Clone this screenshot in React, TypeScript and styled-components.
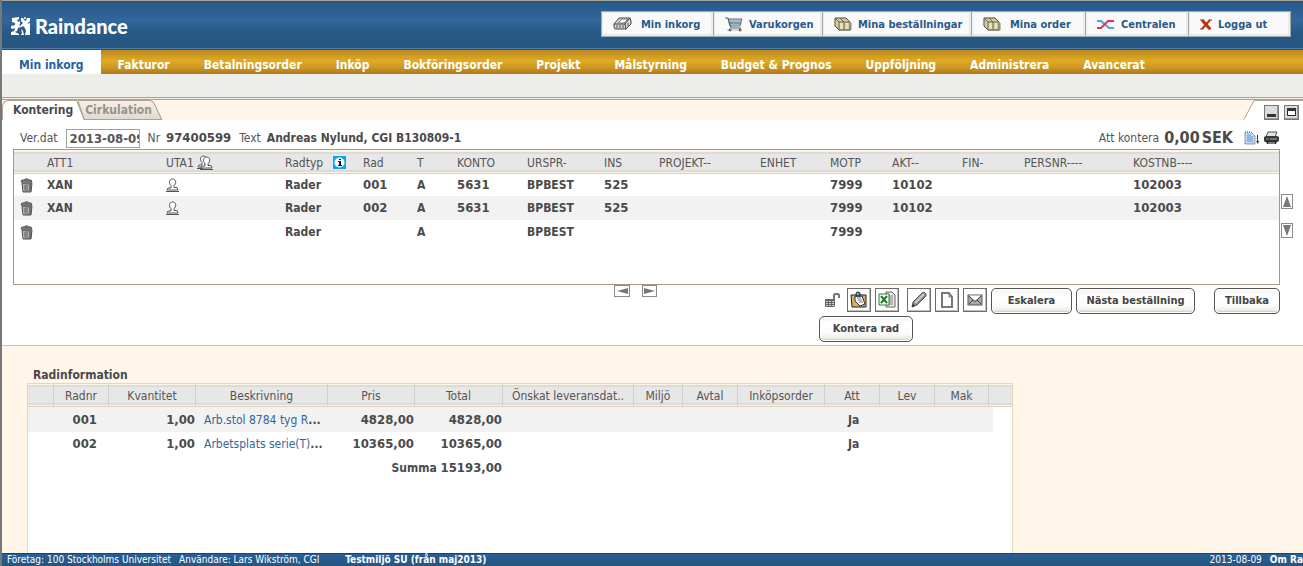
import React from 'react';
import styled, { createGlobalStyle } from 'styled-components';

const sans = '"DejaVu Sans Condensed", "DejaVu Sans", sans-serif';

const Global = createGlobalStyle`
  *, *::before, *::after { box-sizing: border-box; }
  body { margin: 0; background: #fff6e9; font-family: ${sans}; font-size: 12px; line-height: 16px; color: #555; }
  button, input { font-family: inherit; font-size: inherit; color: inherit; margin: 0; }
  button { cursor: pointer; }
  svg { display: block; flex: none; }
`;

const Page = styled.div`
  min-height: 100vh;
  display: flex;
  flex-direction: column;
  overflow: hidden;
  border-left: 2px solid #77787a;
`;

const Header = styled.header`
  display: flex;
  justify-content: space-between;
  align-items: center;
  height: 50px;
  padding: 0 12px 2px 9px;
  border-top: 1px solid #a9a596;
  border-bottom: 1px solid #24527f;
  box-shadow: inset 0 -1px 0 #4a7cae, inset 0 1px 0 #2a4f7c;
  background: linear-gradient(#28588a, #336699 42%, #285986 66%, #265581);
`;

const Logo = styled.a`
  display: flex;
  align-items: center;
  gap: 4px;
  padding-top: 4px;
  color: #fff;
  text-decoration: none;
  font: 900 20px/24px Lato, sans-serif;
`;

const QuickLinks = styled.nav`
  display: flex;
  height: 26px;
  border: 1px solid #a3aaab;
  background: #a3aaab;
  gap: 1px;
`;

const QuickButton = styled.button<{ $w: number; $gap: number }>`
  display: flex;
  align-items: center;
  gap: ${p => p.$gap}px;
  width: ${p => p.$w}px;
  padding: 0 0 0 10px;
  border: 1px solid #e6ecec;
  background: #f9f9f9;
  box-shadow: inset -1px -1px 0 #e6ecec;
  color: #28598c;
  font-size: 11px;
  font-weight: bold;
  white-space: nowrap;
`;

const MainNav = styled.nav`
  display: flex;
  height: 24px;
  background: linear-gradient(#bb8720, #dfac23 45%, #cf9a22 70%, #ae7a20);
`;

const NavLink = styled.a<{ $active?: boolean }>`
  padding: 7px 17px 0 17px;
  color: ${p => (p.$active ? '#28619c' : '#fff')};
  background: ${p => (p.$active ? '#fff' : 'none')};
  font-weight: bold;
  text-decoration: none;
  white-space: nowrap;
`;

const SubBar = styled.div`
  height: 26px;
  background: #edeeea;
  border-bottom: 3px double #aaa591;
`;

const TabStrip = styled.div`
  display: flex;
  justify-content: space-between;
  height: 20px;
  background: #fff6e9;
`;

const Tabs = styled.div`
  display: flex;
`;

const Tab = styled.button<{ $active?: boolean }>`
  position: relative;
  z-index: ${p => (p.$active ? 1 : 0)};
  height: 20px;
  margin-right: -6px;
  padding: ${p => (p.$active ? '0 11px' : '0 11px 0 7px')};
  border: 0;
  background: none;
  color: ${p => (p.$active ? '#4a4a4a' : '#969488')};
  font-weight: bold;
  line-height: 21px;
  svg { position: absolute; inset: 0; width: 100%; height: 100%; }
  span { position: relative; }
`;

const WindowTools = styled.div`
  display: flex;
  align-items: flex-end;
  gap: 5px;
  padding-right: 4px;
`;

const PlainButton = styled.button`
  display: block;
  padding: 0;
  border: 0;
  background: none;
`;

const Panel = styled.main`
  padding: 0 10px 3px 11px;
  background: #fff;
  border-bottom: 1px solid #c8c3bd;
`;

const InfoRow = styled.div`
  display: flex;
  justify-content: space-between;
  align-items: center;
  height: 29px;
  padding: 7px 14px 0 7px;
  white-space: nowrap;
`;

const InfoGroup = styled.div<{ $gap: number }>`
  display: flex;
  align-items: center;
  gap: ${p => p.$gap}px;
`;

const Bold = styled.b`
  color: #4a4a4a;
`;

const Num = styled.b`
  font-size: 13px;
  color: #4a4a4a;
`;

const Pair = styled.span`
  display: flex;
  gap: 6px;
`;

const DateInput = styled.input`
  width: 74px;
  height: 19px;
  padding: 0 0 0 3px;
  border: 1px solid #9aa5a8;
  background: #fff;
  font-size: 13px;
  font-weight: bold;
`;

const Amount = styled.b`
  display: flex;
  gap: 2px;
  margin-right: 6px;
  font-size: 16px;
  color: #4a4a4a;
`;

const GridArea = styled.div`
  display: flex;
`;

const GridBox = styled.div`
  flex: 1;
  min-width: 0;
  min-height: 136px;
  overflow: hidden;
  border: 1px solid #a99780;
`;

const headBands =
  'linear-gradient(#fdf4e4 0 2px, #dbdbdb 2px 4px, #e7e7e7 4px 20px, #dbdbdb 20px 22px, #fdf4e4 22px)';

const AccountTable = styled.table`
  width: 100%;
  table-layout: fixed;
  border-collapse: separate;
  border-spacing: 0;
  white-space: nowrap;
  th, td { padding: 0; text-align: left; }
  thead tr { background: ${headBands}; }
  th { height: 24px; padding-top: 2px; border-bottom: 1px solid #e0d3b4; font-weight: normal; }
  td { height: 24px; font-weight: bold; color: #4a4a4a; }
  tbody tr:first-child td { height: 22px; }
  tbody tr:nth-child(2) { background: #f2f2f2; }
  td:first-child { padding-left: 6px; }
`;

const HeadLabel = styled.span<{ $gap: number }>`
  display: flex;
  align-items: center;
  gap: ${p => p.$gap}px;
`;

const RowPager = styled.div`
  display: flex;
  flex-direction: column;
  gap: 14px;
  padding: 45px 0 0 1px;
  width: 13px;
`;

const ArrowButton = styled.button<{ $w: number; $h: number }>`
  display: flex;
  align-items: center;
  justify-content: center;
  width: ${p => p.$w}px;
  height: ${p => p.$h}px;
  padding: 0;
  border: 1px solid #8b8b8b;
  background: #fff;
`;

const Actions = styled.div`
  display: grid;
  grid-template-columns: 1fr 461px;
  padding-right: 13px;
`;

const ColumnPager = styled.div`
  display: flex;
  justify-content: flex-end;
  gap: 12px;
  padding-right: 162px;
`;

const ButtonStack = styled.div`
  display: flex;
  flex-direction: column;
  gap: 2px;
  padding-top: 3px;
`;

const ButtonRow = styled.div`
  display: flex;
  gap: 4px;
`;

const IconGroup = styled.div`
  display: flex;
  gap: 4px;
  margin-right: 4px;
`;

const LockSlot = styled.div`
  width: 24px;
  padding: 4px 0 0 6px;
`;

const IconButton = styled.button`
  display: flex;
  align-items: center;
  justify-content: center;
  width: 24px;
  height: 24px;
  padding: 0;
  border: 1px solid #6d6d6d;
  background: #fff;
  box-shadow: inset -1px -1px 0 #bdbdbd;
`;

const PushButton = styled.button<{ $w: number; $push?: boolean }>`
  width: ${p => p.$w}px;
  height: 26px;
  margin-left: ${p => (p.$push ? 'auto' : '0')};
  padding: 0 0 2px;
  border: 1px solid #555;
  border-radius: 5px;
  background: linear-gradient(#f4f4f4, #fff 30%, #fbfbf8 70%, #e6e5da);
  box-shadow: inset 0 0 0 1px #fff, inset 0 -2px 1px #d5d3c4;
  color: #444;
  font-size: 11px;
  font-weight: bold;
  white-space: nowrap;
`;

const Lower = styled.section`
  flex: 1;
  display: flex;
  flex-direction: column;
  align-items: flex-start;
  padding: 20px 0 0 25px;
`;

const Title = styled.h2`
  margin: 0;
  padding: 1px 0 0 6px;
  font-size: 12px;
  line-height: 16px;
  color: #4a4a4a;
`;

const LinesBox = styled.div`
  flex: 1;
  background: #fff;
  border: 1px solid #e0d8bf;
  border-bottom: 0;
`;

const LinesTable = styled.table`
  width: 984px;
  table-layout: fixed;
  border-collapse: separate;
  border-spacing: 0;
  white-space: nowrap;
  th, td { padding: 0; }
  thead tr { background: linear-gradient(#fdf4e4 0 1px, #dbdbdb 1px 3px, #e7e7e7 3px 19px, #dbdbdb 19px 21px, #fdf4e4 21px); }
  th { height: 23px; padding-top: 2px; border-bottom: 1px solid #e0d3b4; font-weight: normal; }
  th + th { border-left: 1px solid #cfcfcf; }
  td { height: 24px; font-weight: bold; color: #4a4a4a; }
  tbody tr:first-child td { height: 25px; }
  tbody tr:first-child td:not(:last-child) { background: #f2f2f2; }
`;

const NumCell = styled.td<{ $pad?: number }>`
  text-align: right;
  && { padding-right: ${p => p.$pad ?? 0}px; }
`;

const DescCell = styled.td`
  && { padding-left: 9px; }
  a { color: #336699; font-weight: normal; text-decoration: none; }
`;

const AttCell = styled.td`
  && { padding-left: 24px; }
`;

const Footer = styled.footer`
  display: flex;
  justify-content: space-between;
  height: 13px;
  padding: 0 0 0 5px;
  border-top: 1px solid #1c4468;
  background: linear-gradient(#2a5f94, #265581);
  color: #fff;
  font-size: 10px;
  line-height: 12px;
  white-space: nowrap;
`;

const FooterGroup = styled.div`
  display: flex;
  gap: 8px;
`;

const Environment = styled.b`
  margin-left: 18px;
`;

const LogoMark = () => (
  <svg width="20" height="19" viewBox="0 0 20 19">
    <path
      fill="#fff"
      d="M1 1L8 0v2L6 3l1 2 2-1v3L8 8l2 1v1L7 11l-1 3-2 1 4 2v1H0v-3l3-1 1-3-3 1-1-1V9l4-1L4 6 1 5zM10 1h2l1 2 2 1 1-3h3v3l-2 2-1 1 3-1v12h-5l1-4-1-3-2-2-2 1V8l2-2-2-2z"
    />
    <circle cx="14" cy="1" r="1" fill="#fff" />
    <path fill="#fff" d="M10 12l2 2 1 4h-3l1-2z" />
  </svg>
);

const InboxIcon = () => (
  <svg width="19" height="14" viewBox="0 0 19 14" strokeLinejoin="round">
    <path d="M1 7l5-6h11l1 3v3l-5 5H2l-1-2z" fill="#d8d6cc" stroke="#444" />
    <path d="M1 7h11l1 5M12 7l5-6" stroke="#444" fill="none" />
    <path d="M5 6l4-4h6l-4 4z" fill="#fff" stroke="#777" />
    <path d="M4 8v3M7 8v3M10 8v3M15 6v3" stroke="#555" />
  </svg>
);

const CartIcon = () => (
  <svg width="19" height="15" viewBox="0 0 19 15" fill="none">
    <path d="M3 2h14l-2 7H5z" fill="#a9c8d6" stroke="#64747c" />
    <path d="M0 1h3l3 10h10M5 6h11" stroke="#555f64" />
    <path d="M8 3l1 6M11 3v6M14 3l-1 6" stroke="#8fa9b4" />
    <path d="M2 13h15" stroke="#b4bcc0" />
    <circle cx="5" cy="13" r="1" stroke="#444" />
    <circle cx="15" cy="13" r="1" stroke="#444" />
  </svg>
);

const BoxesIcon = () => (
  <svg width="18" height="14" viewBox="0 0 18 14" strokeLinejoin="round">
    <path d="M1 1h11l4 4v8H5L1 9z" fill="#d9cc9c" stroke="#4b4940" />
    <path d="M5 13V5h11M5 5L1 1M6 1l4 4v8" fill="none" stroke="#6b6650" />
    <path d="M6 6h3v6H6zM12 6h2v6h-2z" fill="#e9e0bb" />
    <path d="M5 13h12V6" fill="none" stroke="#8a8674" />
  </svg>
);

const ShuffleIcon = () => (
  <svg width="18" height="11" viewBox="0 0 18 11" fill="none" strokeWidth="2">
    <path d="M0 2h4l8 7h5" stroke="#5b9ad4" />
    <path d="M0 9h4l7-7h6" stroke="#e2315f" />
  </svg>
);

const CrossIcon = () => (
  <svg width="12" height="11" viewBox="0 0 12 11" fill="none" stroke="#bb2f0d">
    <path d="M2 1l8 9" strokeWidth="3" />
    <path d="M10 1l-8 9" strokeWidth="2" />
    <path d="M0 1h3M9 1h3M0 10h3M9 10h2" strokeWidth="1" />
  </svg>
);

const TrashIcon = () => (
  <svg width="13" height="15" viewBox="0 0 13 15">
    <path d="M2 5h10l-1 9H3z" fill="#8c8c8c" stroke="#505050" />
    <path d="M1 4l1-2h9l1 2z" fill="#999" stroke="#4a4a4a" />
    <path d="M5 2V1h3v1" fill="none" stroke="#4a4a4a" />
    <path d="M4 6v7M6 7v5M8 7v5" stroke="#ddd" />
    <path d="M5 7v5M7 7v5M10 6v7" stroke="#555" />
  </svg>
);

const stampShape = 'M5 7.500C3 6 2.500 1 6.500 1s4 5 1.500 6.500v2h3l1 2.500H1l1-2h3z';

const Stamp = () => (
  <svg width="13" height="15" viewBox="0 0 13 15" fill="#fff" stroke="#555">
    <path d={stampShape} />
    <path d="M0 13.500h13" />
  </svg>
);

const DoubleStamp = () => (
  <svg width="16" height="16" viewBox="0 0 16 16" fill="#fff" stroke="#555">
    <path d={stampShape} />
    <path d="M0 13.500h6" />
    <g transform="translate(3 1)">
      <path d={stampShape} />
      <path d="M0 13.500h13" />
    </g>
  </svg>
);

const InfoIcon = () => (
  <svg width="13" height="13" viewBox="0 0 13 13">
    <rect width="13" height="13" fill="#0aa5f5" />
    <circle cx="6.500" cy="6.500" r="5" fill="#fff" />
    <path d="M6 3h2v1H6zM5 5h3v4h1v1H5V9h1V6H5z" fill="#1c1440" />
  </svg>
);

const CopyIcon = () => (
  <svg width="15" height="14" viewBox="0 0 15 14">
    <path d="M1 1h6l4 4v8H1z" fill="#c5dbf5" stroke="#444" strokeDasharray="1 1" />
    <path d="M3 4h4M3 6h6M3 8h6M3 10h6" stroke="#5b8fd0" strokeWidth="1" />
    <path d="M13.500 4v7" stroke="#333" />
    <path d="M12 10h3l-1 3z" fill="#333" />
  </svg>
);

const PrinterIcon = () => (
  <svg width="15" height="14" viewBox="0 0 15 14">
    <path d="M4 1h9l-2 5H2z" fill="#dde5ee" stroke="#555" />
    <path d="M0 6l2-1h11l2 1v4l-2 1H1l-1-1z" fill="#3b3b3b" />
    <path d="M2 10h11l-1 3H3z" fill="#222" />
    <path d="M4 12h7" stroke="#ddd" />
    <path d="M2 8h3" stroke="#35c03b" />
    <path d="M6 8h7" stroke="#aaa" />
  </svg>
);

const WindowIcon = ({ max }: { max?: boolean }) => (
  <svg width="15" height="15" viewBox="0 0 15 15">
    <rect x=".5" y=".5" width="14" height="14" fill="#dcdcdc" stroke="#777" />
    <path d="M1 13.500h13M13.500 1v13" stroke="#999" />
    {max ? (
      <>
        <path d="M3.500 3.500h8v7h-8z" fill="#fff" stroke="#222" />
        <path d="M3 3h9v3H3z" fill="#333" />
      </>
    ) : (
      <path d="M3 9h9v3H3z" fill="#333" />
    )}
  </svg>
);

const LockIcon = () => (
  <svg width="15" height="16" viewBox="0 0 15 16">
    <path d="M9 8V3l1-1h3l1 1v3" fill="none" stroke="#777" strokeWidth="2" />
    <path d="M0 7h10v7l-1 1H0z" fill="#666" />
    <path d="M1 9.500h8M1 11.500h8M1 13.500h8" stroke="#ccc" strokeDasharray="2 1" />
  </svg>
);

const ClipboardIcon = () => (
  <svg width="18" height="18" viewBox="0 0 18 18">
    <path d="M1 4h15v12H2z" fill="#d2b25e" stroke="#222" />
    <path d="M5 5h7l3 8-5 2-5-5z" fill="#fff" stroke="#333" />
    <path d="M7 7h4M8 9h4M9 11h4" stroke="#777" />
    <path d="M5 4l3-3 4 3v2H5z" fill="#456" />
    <circle cx="8" cy="3" r="2" fill="#7cabc4" stroke="#222" />
  </svg>
);

const ExcelIcon = () => (
  <svg width="18" height="18" viewBox="0 0 18 18">
    <path d="M8 1h6l3 3v12H8z" fill="#e7e7e7" stroke="#666" />
    <path d="M11 5h4M11 7h4M11 9h4M11 11h4M11 13h4" stroke="#888" />
    <path d="M1 3h10v11H1z" fill="#fff" stroke="#287a35" strokeWidth="1" />
    <path d="M3 5l6 7M9 5l-6 7" stroke="#1f7a2c" strokeWidth="2" />
  </svg>
);

const PenIcon = () => (
  <svg width="18" height="18" viewBox="0 0 18 18">
    <path d="M2 16l1-5 9-9 2-1 2 2v2l-9 9z" fill="#888" stroke="#555" />
    <path d="M5 12l9-9" stroke="#ccc" strokeWidth="2" />
    <path d="M2 16l1-3 2 2z" fill="#333" />
  </svg>
);

const PageIcon = () => (
  <svg width="12" height="16" viewBox="0 0 12 16">
    <path d="M1 1h7l3 4v10H1z" fill="#fff" stroke="#777" strokeWidth="2" />
    <path d="M8 1v4h3" fill="none" stroke="#777" />
  </svg>
);

const MailIcon = () => (
  <svg width="16" height="12" viewBox="0 0 16 12">
    <rect x="1" y="1" width="14" height="10" fill="#aaa" stroke="#555" />
    <path d="M2 1.500h12L8 7z" fill="#fff" />
    <path d="M2 2l5 5h2l5-5M2 10l4-4M14 10l-4-4" fill="none" stroke="#444" />
  </svg>
);

const Arrow = ({ dir }: { dir: 'up' | 'down' | 'left' | 'right' }) => {
  const shapes = {
    up: [8, 11, 'M4 0l4 11H0z'],
    down: [8, 11, 'M0 0h8L4 11z'],
    left: [11, 6, 'M0 3l11-3v6z'],
    right: [11, 6, 'M0 0l11 3-11 3z'],
  } as const;
  const [w, h, d] = shapes[dir];
  return (
    <svg width={w} height={h} viewBox={`0 0 ${w} ${h}`}>
      <path d={d} fill="#777" />
    </svg>
  );
};

const quick = [
  { label: 'Min inkorg', w: 111, gap: 9, icon: <InboxIcon /> },
  { label: 'Varukorgen', w: 108, gap: 5, icon: <CartIcon /> },
  { label: 'Mina beställningar', w: 148, gap: 6, icon: <BoxesIcon /> },
  { label: 'Mina order', w: 113, gap: 9, icon: <BoxesIcon /> },
  { label: 'Centralen', w: 102, gap: 6, icon: <ShuffleIcon /> },
  { label: 'Logga ut', w: 101, gap: 6, icon: <CrossIcon /> },
];

const sections = [
  'Min inkorg', 'Fakturor', 'Betalningsorder', 'Inköp', 'Bokföringsorder', 'Projekt',
  'Målstyrning', 'Budget & Prognos', 'Uppföljning', 'Administrera', 'Avancerat',
];

const accountCols = [33, 119, 119, 78, 54, 40, 70, 77, 55, 101, 70, 62, 70, 62, 109];

const accountRows = [
  { att: 'XAN', rad: '001', konto: '5631', ins: '525', akt: '10102', kost: '102003' },
  { att: 'XAN', rad: '002', konto: '5631', ins: '525', akt: '10102', kost: '102003' },
  { att: '', rad: '', konto: '', ins: '', akt: '', kost: '' },
];

const lineCols = [25, 55, 87, 132, 87, 88, 131, 49, 55, 87, 55, 55, 54, 5, 19];
const lineHeads = [
  '', 'Radnr', 'Kvantitet', 'Beskrivning', 'Pris', 'Total', 'Önskat leveransdat..',
  'Miljö', 'Avtal', 'Inköpsorder', 'Att', 'Lev', 'Mak',
];
const lines = [
  { nr: '001', qty: '1,00', text: 'Arb.stol 8784 tyg R', price: '4828,00' },
  { nr: '002', qty: '1,00', text: 'Arbetsplats serie(T)', price: '10365,00' },
];

export default function App() {
  return (
    <Page>
      <Global />
      <Header>
        <Logo href="#"><LogoMark />Raindance</Logo>
        <QuickLinks>
          {quick.map(q => (
            <QuickButton key={q.label} $w={q.w} $gap={q.gap}>{q.icon}{q.label}</QuickButton>
          ))}
        </QuickLinks>
      </Header>
      <MainNav>
        {sections.map((s, i) => <NavLink key={s} href="#" $active={i === 0}>{s}</NavLink>)}
      </MainNav>
      <SubBar />
      <TabStrip>
        <Tabs>
          <Tab $active>
            <svg viewBox="0 0 82 20" preserveAspectRatio="none">
              <path d="M0 20V6q1-5 6-5.500h68L82 20z" fill="#fff" />
              <path d="M.5 20V6q1-5 6-5.500h68L82 20" fill="none" stroke="#b3a08a" />
            </svg>
            <span>Kontering</span>
          </Tab>
          <Tab>
            <svg viewBox="0 0 84 20" preserveAspectRatio="none">
              <defs>
                <linearGradient id="idle" x1="0" y1="0" x2="0" y2="1">
                  <stop offset="0" stopColor="#f6f1ec" />
                  <stop offset="1" stopColor="#e2d8d0" />
                </linearGradient>
              </defs>
              <path d="M0 .5h70q4 0 6 4l7 15H6z" fill="url(#idle)" stroke="#b3a08a" />
            </svg>
            <span>Cirkulation</span>
          </Tab>
        </Tabs>
        <WindowTools>
          <svg width="15" height="20" viewBox="0 0 15 20" overflow="visible">
            <path d="M0 20L10 .5h50V20z" fill="#fff" />
            <path d="M0 19.500L10 .5h50" fill="none" stroke="#b3a08a" />
          </svg>
          <PlainButton aria-label="Minimera"><WindowIcon /></PlainButton>
          <PlainButton aria-label="Maximera"><WindowIcon max /></PlainButton>
        </WindowTools>
      </TabStrip>
      <Panel>
        <InfoRow>
          <InfoGroup $gap={8}>
            <label htmlFor="verdat">Ver.dat</label>
            <DateInput id="verdat" defaultValue="2013-08-09" />
            <Pair>Nr <Num>97400599</Num></Pair>
            <Pair>Text <Bold>Andreas Nylund, CGI B130809-1</Bold></Pair>
          </InfoGroup>
          <InfoGroup $gap={5}>
            Att kontera <Amount><span>0,00</span><span>SEK</span></Amount>
            <PlainButton aria-label="Kopiera"><CopyIcon /></PlainButton>
            <PlainButton aria-label="Skriv ut"><PrinterIcon /></PlainButton>
          </InfoGroup>
        </InfoRow>
        <GridArea>
          <GridBox>
            <AccountTable>
              <colgroup>
                {accountCols.map((w, i) => <col key={i} width={w} />)}
                <col />
              </colgroup>
              <thead>
                <tr>
                  <th />
                  <th>ATT1</th>
                  <th><HeadLabel $gap={3}>UTA1<DoubleStamp /></HeadLabel></th>
                  <th><HeadLabel $gap={10}>Radtyp<InfoIcon /></HeadLabel></th>
                  <th>Rad</th>
                  <th>T</th>
                  <th>KONTO</th>
                  <th>URSPR-</th>
                  <th>INS</th>
                  <th>PROJEKT--</th>
                  <th>ENHET</th>
                  <th>MOTP</th>
                  <th>AKT--</th>
                  <th>FIN-</th>
                  <th>PERSNR----</th>
                  <th>KOSTNB----</th>
                </tr>
              </thead>
              <tbody>
                {accountRows.map((r, i) => (
                  <tr key={i}>
                    <td><PlainButton aria-label="Ta bort"><TrashIcon /></PlainButton></td>
                    <td>{r.att}</td>
                    <td>{r.att && <Stamp />}</td>
                    <td>Rader</td>
                    <td><Num>{r.rad}</Num></td>
                    <td>A</td>
                    <td><Num>{r.konto}</Num></td>
                    <td>BPBEST</td>
                    <td><Num>{r.ins}</Num></td>
                    <td />
                    <td />
                    <td><Num>7999</Num></td>
                    <td><Num>{r.akt}</Num></td>
                    <td />
                    <td />
                    <td><Num>{r.kost}</Num></td>
                  </tr>
                ))}
              </tbody>
            </AccountTable>
          </GridBox>
          <RowPager>
            <ArrowButton $w={12} $h={15} aria-label="Upp"><Arrow dir="up" /></ArrowButton>
            <ArrowButton $w={12} $h={15} aria-label="Ned"><Arrow dir="down" /></ArrowButton>
          </RowPager>
        </GridArea>
        <Actions>
          <ColumnPager>
            <ArrowButton $w={16} $h={12} aria-label="Vänster"><Arrow dir="left" /></ArrowButton>
            <ArrowButton $w={15} $h={12} aria-label="Höger"><Arrow dir="right" /></ArrowButton>
          </ColumnPager>
          <ButtonStack>
            <ButtonRow>
              <IconGroup>
                <LockSlot><LockIcon /></LockSlot>
                <IconButton aria-label="Anteckning"><ClipboardIcon /></IconButton>
                <IconButton aria-label="Excel"><ExcelIcon /></IconButton>
              </IconGroup>
              <IconButton aria-label="Redigera"><PenIcon /></IconButton>
              <IconButton aria-label="Nytt dokument"><PageIcon /></IconButton>
              <IconButton aria-label="E-post"><MailIcon /></IconButton>
              <PushButton $w={81}>Eskalera</PushButton>
              <PushButton $w={119}>Nästa beställning</PushButton>
              <PushButton $w={66} $push>Tillbaka</PushButton>
            </ButtonRow>
            <ButtonRow>
              <PushButton $w={94}>Kontera rad</PushButton>
            </ButtonRow>
          </ButtonStack>
        </Actions>
      </Panel>
      <Lower>
        <Title>Radinformation</Title>
        <LinesBox>
          <LinesTable>
            <colgroup>{lineCols.map((w, i) => <col key={i} width={w} />)}</colgroup>
            <thead>
              <tr>
                {lineHeads.map((h, i) => <th key={i}>{h}</th>)}
                <th colSpan={2} />
              </tr>
            </thead>
            <tbody>
              {lines.map(l => (
                <tr key={l.nr}>
                  <td />
                  <NumCell $pad={11}><Num>{l.nr}</Num></NumCell>
                  <NumCell><Num>{l.qty}</Num></NumCell>
                  <DescCell><a href="#">{l.text}</a>...</DescCell>
                  <NumCell><Num>{l.price}</Num></NumCell>
                  <NumCell><Num>{l.price}</Num></NumCell>
                  <td colSpan={4} />
                  <AttCell>Ja</AttCell>
                  <td colSpan={3} />
                  <td />
                </tr>
              ))}
              <tr>
                <NumCell colSpan={6}>Summa <Num>15193,00</Num></NumCell>
                <td colSpan={9} />
              </tr>
            </tbody>
          </LinesTable>
        </LinesBox>
      </Lower>
      <Footer>
        <FooterGroup>
          <span>Företag: 100 Stockholms Universitet</span>
          <span>Användare: Lars Wikström, CGI</span>
          <Environment>Testmiljö SU (från maj2013)</Environment>
        </FooterGroup>
        <FooterGroup>
          <span>2013-08-09</span>
          <b>Om Ra</b>
        </FooterGroup>
      </Footer>
    </Page>
  );
}
